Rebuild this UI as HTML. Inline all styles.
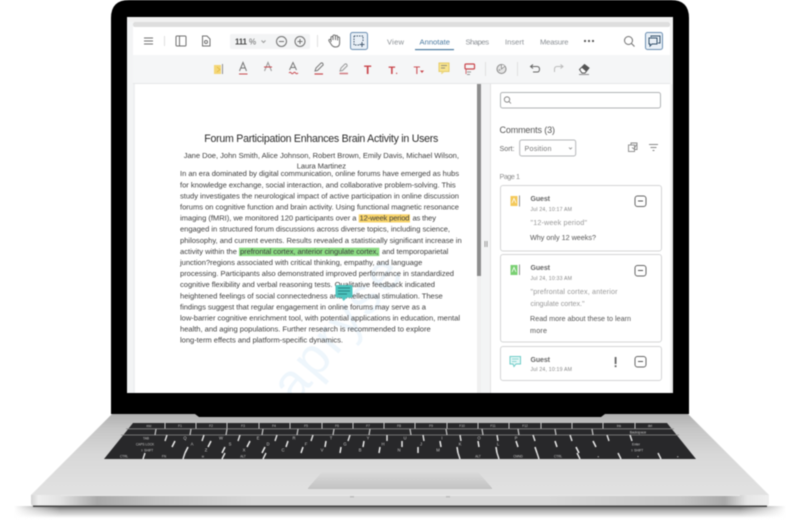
<!DOCTYPE html>
<html><head><meta charset="utf-8"><style>
html,body{margin:0;padding:0;background:#fff;width:800px;height:520px;overflow:hidden}
svg{display:block;filter:blur(.45px)}
text{font-family:"Liberation Sans",sans-serif}
</style></head><body>
<svg width="800" height="520" viewBox="0 0 800 520" xmlns="http://www.w3.org/2000/svg">
<defs>
<linearGradient id="base" x1="0" y1="0" x2="0" y2="1"><stop offset="0" stop-color="#b0b0b0"/><stop offset=".18" stop-color="#c6c6c6"/><stop offset=".5" stop-color="#d8d8d8"/><stop offset="1" stop-color="#e2e2e2"/></linearGradient>
<linearGradient id="lip" x1="0" y1="0" x2="1" y2="0"><stop offset="0" stop-color="#d2d2d2"/><stop offset=".01" stop-color="#efefef"/><stop offset=".04" stop-color="#e2e2e2"/><stop offset=".09" stop-color="#a9a9a9"/><stop offset=".17" stop-color="#c4c4c4"/><stop offset=".3" stop-color="#d8d8d8"/><stop offset=".7" stop-color="#d8d8d8"/><stop offset=".88" stop-color="#c6c6c6"/><stop offset=".94" stop-color="#a9a9a9"/><stop offset=".97" stop-color="#e6e6e6"/><stop offset="1" stop-color="#efefef"/></linearGradient>
<linearGradient id="shad" x1="0" y1="0" x2="0" y2="1"><stop offset="0" stop-color="#666"/><stop offset=".4" stop-color="#b5b5b5"/><stop offset="1" stop-color="#fff"/></linearGradient>
<linearGradient id="fadeL" x1="0" y1="0" x2="1" y2="0"><stop offset="0" stop-color="#fff"/><stop offset="1" stop-color="#fff" stop-opacity="0"/></linearGradient>
<linearGradient id="fadeR" x1="0" y1="0" x2="1" y2="0"><stop offset="0" stop-color="#fff" stop-opacity="0"/><stop offset="1" stop-color="#fff"/></linearGradient>
<linearGradient id="pad" x1="0" y1="0" x2="0" y2="1"><stop offset="0" stop-color="#dadada"/><stop offset="1" stop-color="#c2c2c2"/></linearGradient>
<clipPath id="doc"><rect x="135" y="84" width="342" height="309"/></clipPath>
</defs>

<!-- shadow -->
<rect x="14" y="506" width="772" height="12" fill="url(#shad)"/>
<rect x="14" y="505" width="46" height="15" fill="url(#fadeL)"/>
<rect x="740" y="505" width="46" height="15" fill="url(#fadeR)"/>

<!-- base -->
<polygon points="112,414 688,414 769,495 31,495" fill="url(#base)"/>
<path d="M31,495H769V503Q769,506.500 765,506.500H35Q31,506.500 31,503Z" fill="url(#lip)"/>
<rect x="33" y="505.500" width="734" height="1.500" fill="#444"/>
<rect x="60" y="495" width="680" height="1" fill="#e8e8e8"/>

<!-- bezel -->
<path d="M111,18Q111,0 129,0H671Q689,0 689,18V414H605L601,417H199L195,414H111Z" fill="#000"/>

<!-- keyboard -->
<polygon points="133,423 667,423 696,459 104,459" fill="#28282a"/>
<g stroke="#c8c8c8" stroke-width="1" fill="none">
<path d="M126,428.800H674M121,435H679" stroke="#8a8a8a" stroke-width=".8"/>
<path d="M165,423V428.500M196,423V428.500M227,423V428.500M259,423V428.500M290,423V428.500M322,423V428.500M353,423V428.500M384,423V428.500M415,423V428.500M447,423V428.500M478,423V428.500M509,423V428.500M541,423V428.500M572,423V428.500M603,423V428.500M635,423V428.500"/>
<path d="M156,429L155,435M191,429L190,435M227,429L226,435M263,429L262,435M298,429L297,435M334,429L333,435M370,429L369,435M410,429L411,435M446,429L447,435M482,429L483,435M518,429L519,435M555,429L556,435M592,429L593,435" stroke-width="1.200"/>
<path d="M167,435L165,441M204,435L202,441M240,435L238,441M277,435L275,441M313,435L311,441M350,435L348,441M387,435L387,441M423,435L424,441M460,435L461,441M497,435L498,441M533,435L535,441M570,435L572,441M607,435L609,441M630,435L632,441" stroke="#e4e4e4" stroke-width="1.400"/>
<path d="M175,441L172,447M211,441L208,447M250,441L247,447M288,441L286,447M326,441L325,447M364,441L363,447M402,441L402,447M440,441L441,447M478,441L479,447M516,441L518,447M555,441L557,447M593,441L596,447" stroke="#ececec" stroke-width="1.500"/>
<path d="M188,447L185,453M225,447L222,453M265,447L262,453M303,447L301,453M341,447L340,453M380,447L379,453M418,447L418,453M457,447L458,453M496,447L497,453M535,447L537,453M576,447L579,453" stroke="#ececec" stroke-width="1.500"/>
<path d="M145,453L143,459M185,453L183,459M225,453L222,459M266,453L263,459M458,453L460,459M497,453L499,459M537,453L539,459M577,453L580,459M618,453L621,459M658,453L661,459" stroke="#e8e8e8" stroke-width="1.400"/>
</g>
<g fill="#c8c8c8" font-size="3.200" text-anchor="middle">
<text x="149" y="427">esc</text><text x="180" y="427">F1</text><text x="211" y="427">F2</text><text x="243" y="427">F3</text><text x="274" y="427">F4</text><text x="306" y="427">F5</text><text x="337" y="427">F6</text><text x="368" y="427">F7</text><text x="399" y="427">F8</text><text x="431" y="427">F9</text><text x="462" y="427">F10</text><text x="493" y="427">F11</text><text x="525" y="427">F12</text><text x="619" y="427">ins</text><text x="650" y="427">del</text>
<text x="638" y="433.500" font-size="3.400">Backspace</text>
<text x="146" y="439.500">TAB</text><text x="185" y="439.500" font-size="4.200">Q</text><text x="221" y="439.500" font-size="4.200">W</text><text x="258" y="439.500" font-size="4.200">E</text><text x="294" y="439.500" font-size="4.200">R</text><text x="331" y="439.500" font-size="4.200">T</text><text x="368" y="439.500" font-size="4.200">Y</text><text x="405" y="439.500" font-size="4.200">U</text><text x="442" y="439.500" font-size="4.200">I</text><text x="479" y="439.500" font-size="4.200">O</text><text x="516" y="439.500" font-size="4.200">P</text>
<text x="145" y="445.500">CAPS LOCK</text><text x="192" y="445.500" font-size="4.200">A</text><text x="230" y="445.500" font-size="4.200">S</text><text x="268" y="445.500" font-size="4.200">D</text><text x="306" y="445.500" font-size="4.200">F</text><text x="345" y="445.500" font-size="4.200">G</text><text x="383" y="445.500" font-size="4.200">H</text><text x="421" y="445.500" font-size="4.200">J</text><text x="460" y="445.500" font-size="4.200">K</text><text x="498" y="445.500" font-size="4.200">L</text><text x="636" y="445.500" font-size="3.400">Enter</text>
<text x="147" y="451.500">⇧ SHIFT</text><text x="206" y="451.500" font-size="4.200">Z</text><text x="244" y="451.500" font-size="4.200">X</text><text x="283" y="451.500" font-size="4.200">C</text><text x="322" y="451.500" font-size="4.200">V</text><text x="360" y="451.500" font-size="4.200">B</text><text x="399" y="451.500" font-size="4.200">N</text><text x="438" y="451.500" font-size="4.200">M</text><text x="637" y="451.500">⇧ SHIFT</text>
<text x="124" y="457.500">CTRL</text><text x="164" y="457.500">FN</text><text x="203" y="457.500">⊞</text><text x="243" y="457.500">ALT</text><text x="478" y="457.500">ALT</text><text x="518" y="457.500">CMND</text><text x="558" y="457.500">CTRL</text><text x="598" y="457.500">◂</text><text x="638" y="457.500">▾</text><text x="678" y="457.500">▸</text>
</g>

<!-- trackpad -->
<polygon points="322,472 478,472 492,488 492,489 308,489 308,488" fill="url(#pad)"/>
<rect x="350" y="496" width="4" height="1.500" fill="#bbb"/><rect x="446" y="496" width="4" height="1.500" fill="#bbb"/>

<!-- screen -->
<rect x="127" y="17" width="546" height="376" fill="#fff"/>
<rect x="127" y="17" width="546" height="5" fill="#f1f1f1"/>
<rect x="133" y="22" width="537" height="5" rx="2" fill="#dedede"/>
<rect x="127" y="22" width="6" height="371" fill="#f3f4f5"/>
<rect x="670" y="22" width="3" height="371" fill="#f3f3f3"/>
<rect x="133" y="27" width="537" height="28" fill="#fff"/>
<rect x="133" y="55" width="537" height="28" fill="#f5f6f7"/>
<rect x="133" y="83" width="537" height="1" fill="#e6e7e8"/>
<rect x="133" y="84" width="2" height="309" fill="#eef0f1"/>

<!-- doc -->
<rect x="135" y="84" width="342" height="309" fill="#fff"/>
<rect x="477" y="84" width="4" height="192" fill="#8d8d8d"/>
<rect x="477" y="276" width="4" height="117" fill="#f0f0f0"/>
<rect x="481" y="84" width="9" height="309" fill="#f3f4f5"/>
<rect x="490" y="84" width="1" height="309" fill="#e2e2e2"/>
<path d="M485,241V247M487,241V247" stroke="#999" stroke-width="1"/>

<g clip-path="url(#doc)"><text transform="translate(295,405) rotate(-50)" font-size="52" fill="#eef6fc" letter-spacing="3">apryse</text></g>

<rect x="358.700" y="214.300" width="51.300" height="8.200" fill="#f8d46a"/>
<rect x="239" y="247.700" width="140.300" height="8.400" fill="#8cdc84"/>

<text x="204.300" y="142" font-size="10.600" fill="#2b2b2b" textLength="234">Forum Participation Enhances Brain Activity in Users</text>
<g font-size="7.600" fill="#3f3f3f">
<text x="183.700" y="158" textLength="275.300">Jane Doe, John Smith, Alice Johnson, Robert Brown, Emily Davis, Michael Wilson,</text>
<text x="296.700" y="168.500" textLength="49.300">Laura Martinez</text>
<text x="180" y="176.200" textLength="279">In an era dominated by digital communication, online forums have emerged as hubs</text>
<text x="180" y="187.300" textLength="275.700">for knowledge exchange, social interaction, and collaborative problem-solving. This</text>
<text x="180" y="198.400" textLength="279">study investigates the neurological impact of active participation in online discussion</text>
<text x="180" y="209.500" textLength="279">forums on cognitive function and brain activity. Using functional magnetic resonance</text>
<text x="180" y="220.600" textLength="176.500">imaging (fMRI), we monitored 120 participants over a</text>
<text x="359.500" y="220.600" textLength="50">12-week period</text>
<text x="412.500" y="220.600" textLength="23.500">as they</text>
<text x="180" y="231.700" textLength="270">engaged in structured forum discussions across diverse topics, including science,</text>
<text x="180" y="242.800" textLength="281.700">philosophy, and current events. Results revealed a statistically significant increase in</text>
<text x="180" y="253.900" textLength="57">activity within the</text>
<text x="240" y="253.900" textLength="138.500">prefrontal cortex, anterior cingulate cortex,</text>
<text x="382" y="253.900" textLength="66.300">and temporoparietal</text>
<text x="180" y="265" textLength="242.300">junction?regions associated with critical thinking, empathy, and language</text>
<text x="180" y="276.100" textLength="274">processing. Participants also demonstrated improved performance in standardized</text>
<text x="180" y="287.200" textLength="255">cognitive flexibility and verbal reasoning tests. Qualitative feedback indicated</text>
<text x="180" y="298.300" textLength="262.700">heightened feelings of social connectedness and intellectual stimulation. These</text>
<text x="180" y="309.400" textLength="246">findings suggest that regular engagement in online forums may serve as a</text>
<text x="180" y="320.500" textLength="280">low-barrier cognitive enrichment tool, with potential applications in education, mental</text>
<text x="180" y="331.600" textLength="250.700">health, and aging populations. Further research is recommended to explore</text>
<text x="180" y="342.700" textLength="163">long-term effects and platform-specific dynamics.</text>
</g>
<!-- sticky note on doc -->
<path d="M337,285H351Q352.500,285 352.500,286.500V296Q352.500,297.500 351,297.500H347L343.500,301L341.500,297.500H337Q335.500,297.500 335.500,296V286.500Q335.500,285 337,285Z" fill="#4dc4bf"/>
<path d="M338,288H350M338,291H350M338,294H347" stroke="#1f6f72" stroke-width=".8"/>

<!-- top toolbar -->
<g fill="none" stroke="#707070" stroke-width="1">
<path d="M144,38H153M144,41H153M144,44H153"/>
<path d="M164.500,36V46M317.500,35V47" stroke="#e0e0e0"/>
<rect x="176" y="36" width="10" height="10" rx="1"/><path d="M179.500,36V46"/>
<path d="M202.500,36H207L210,39V46H202.500Z"/><circle cx="206" cy="42" r="1.500"/>
<rect x="230" y="34" width="80" height="15" rx="2" fill="#f3f4f5" stroke="none"/>
<path d="M261.500,40.500L263.500,42.500L265.500,40.500" stroke="#999"/>
<circle cx="281.500" cy="41.500" r="5"/><path d="M279,41.500H284"/>
<circle cx="300" cy="41.500" r="5"/><path d="M297.500,41.500H302.500M300,39V44"/>
<path d="M331,42V37.500Q331,36.500 332,36.500T333,37.500V40M333,37V36Q333,35 334.200,35T335.400,36V40M335.400,36.500Q335.400,35.500 336.500,35.500T337.600,36.500V40.500M337.600,38Q337.600,37 338.600,37T339.600,38V43Q339.600,47 335.500,47Q332.500,47 331,44L329,41Q328.500,40 329.500,39.500T331,40.500"/>
<rect x="350.500" y="32.500" width="17" height="17" rx="2" fill="#e9f0f7" stroke="#6c8fb2"/>
<path d="M354,36H363V41M354,36V45H359" stroke="#445a70" stroke-dasharray="1.500 1"/><path d="M362,42V47M359.500,44.500H364.500" stroke="#445a70"/>
<circle cx="628.500" cy="40.500" r="4"/><path d="M631.500,43.500L634.500,46.500"/>
<rect x="645.500" y="32.500" width="17" height="17" rx="2" fill="#e9f0f7" stroke="#6c8fb2"/>
<path d="M651,37V36H660V43H658" stroke="#33506b"/><path d="M649,38H657V44H652L650,46V44H649Z" stroke="#33506b"/>
</g>
<text x="235" y="44.500" font-size="8" font-weight="bold" fill="#444" textLength="12">111</text>
<text x="249" y="44.500" font-size="8" fill="#666">%</text>
<g font-size="7.600" fill="#8a8f94">
<text x="387" y="44.500" textLength="17">View</text>
<text x="419.500" y="44.500" textLength="30.500" fill="#4b7aa0">Annotate</text>
<text x="465.500" y="44.500" textLength="23.500">Shapes</text>
<text x="505" y="44.500" textLength="19">Insert</text>
<text x="540" y="44.500" textLength="28.500">Measure</text>
</g>
<rect x="415" y="49" width="39" height="1.200" fill="#4b7aa0"/>
<circle cx="585" cy="41" r="1.100" fill="#555"/><circle cx="589" cy="41" r="1.100" fill="#555"/><circle cx="593" cy="41" r="1.100" fill="#555"/>

<!-- annotate toolbar -->
<rect x="214" y="65" width="7" height="9" fill="#f4d676"/><path d="M217,67L220,69.500L217,72" stroke="#e0b840" fill="none" stroke-width=".8"/><path d="M222.500,64V74" stroke="#777" stroke-width=".8"/>
<g font-size="11" fill="none" stroke="#777" stroke-width="1">
<path d="M239.500,71L243,62.500L246.500,71M240.800,68H245.200"/><path d="M239,74H247.500" stroke="#c84a50"/>
<path d="M264.500,71L268,62.500L271.500,71" stroke="#999"/><path d="M264,67H272" stroke="#c84a50"/>
<path d="M289.500,70L293,62.500L296.500,70M290.800,67.500H295.200"/><path d="M289,73Q290.200,71.500 291.200,73T293.400,73T295.600,73T298,73" stroke="#c84a50"/>
<path d="M315,71L316,68L321,63Q322.500,62.500 323,64T322.500,65.500L317.500,70.500Z"/><path d="M314.500,74H323" stroke="#c84a50" stroke-width="1.200"/>
<path d="M340,71L341,68L345,64Q346.500,63.500 347,65T346.500,66.500L342.500,70.500Z" stroke="#999"/><path d="M339.500,73.500H348" stroke="#d07a80" stroke-width="1.500"/>
</g>
<g fill="#c9474d" font-weight="bold">
<text x="364" y="74" font-size="12">T</text>
<text x="388.500" y="74" font-size="11">T</text><text x="395.500" y="74" font-size="8">.</text>
<text x="413.500" y="74" font-size="11" font-weight="normal">T</text>
</g>
<path d="M420,70.500H424L422,73Z" fill="#c9474d"/>
<rect x="439" y="63" width="10" height="8.500" fill="#f8e48e" stroke="#e5cc6a" stroke-width="1"/><path d="M441,65.500H447M441,68H445" stroke="#777" stroke-width=".7"/><path d="M442,71.500L441.500,74L444.500,71.500Z" fill="#f8e48e" stroke="#e5cc6a" stroke-width=".5"/>
<rect x="465" y="64" width="9.500" height="5" rx="1" fill="none" stroke="#c9474d" stroke-width="1.200"/><path d="M467,72H471M467,74.500H470" stroke="#777" stroke-width=".8"/><path d="M466,69V74" stroke="#c9474d" stroke-width=".8"/>
<path d="M485.500,62V76M517.500,62V76" stroke="#e0e0e0"/>
<circle cx="501.500" cy="69" r="4.500" fill="#e4e4e4" stroke="#888"/><path d="M501.500,64.500V69L505,66" stroke="#888" fill="#fff" stroke-width=".8"/><circle cx="499.500" cy="70" r=".8" fill="#888"/>
<path d="M531,66.500H537Q539.500,66.500 539.500,69.300T537,72H533M533,64.500L530.500,66.500L533,68.500" fill="none" stroke="#666" stroke-width="1"/>
<path d="M562.500,66.500H557Q554.500,66.500 554.500,69.300V72M560.500,64.500L563,66.500L560.500,68.500" fill="none" stroke="#bbb" stroke-width="1"/>
<path d="M579.500,69.500L584.500,64.500L589,68L585,73H582Z" fill="#fff" stroke="#555" stroke-width="1"/><path d="M584.500,64.500L589,68L586,71.500L581.500,67.500Z" fill="#555"/><path d="M579,74.500H589" stroke="#777" stroke-width=".8"/>

<!-- right panel -->
<rect x="500.500" y="92.500" width="160" height="15.500" rx="2" fill="#fff" stroke="#b1b3b5"/>
<circle cx="507" cy="99.500" r="2.700" fill="none" stroke="#777" stroke-width=".8"/><path d="M509,101.500L511,103.500" stroke="#777" stroke-width=".8"/>
<text x="499.500" y="133" font-size="9" fill="#555" textLength="55.500">Comments (3)</text>
<text x="499.500" y="151" font-size="7.200" fill="#666" textLength="15">Sort:</text>
<rect x="519.700" y="140" width="56" height="16" rx="2" fill="#fff" stroke="#b5b7b9"/>
<text x="524.500" y="151" font-size="7.200" fill="#777" textLength="27">Position</text>
<path d="M569,147.500L570.500,149L572,147.500" stroke="#888" fill="none" stroke-width=".8"/>
<g fill="none" stroke="#888" stroke-width=".9">
<rect x="628.500" y="145" width="6" height="6.500"/><path d="M631,145V143H637V149.500H634.500M632,147.500L634,149L636.500,144.500" stroke="#888"/>
<path d="M649,144.500H658M650.500,147.500H656.500M652.500,150.500H654.500"/>
</g>
<text x="499.500" y="179" font-size="7.200" fill="#8c8c8c" textLength="20.500">Page 1</text>

<rect x="500.500" y="185.500" width="161" height="65.500" rx="2.500" fill="#fff" stroke="#d4d5d6"/>
<rect x="500.500" y="254.500" width="161" height="87.500" rx="2.500" fill="#fff" stroke="#d4d5d6"/>
<rect x="500.500" y="346.500" width="161" height="34" rx="2.500" fill="#fff" stroke="#d4d5d6"/>
<rect x="671.500" y="84" width="1" height="309" fill="#e5e5e5"/>

<!-- card 1 -->
<rect x="510.500" y="196" width="7" height="10" fill="#f4c95a"/><path d="M512,203L514,198.500L516,203" stroke="#fff" fill="none" stroke-width=".8"/><path d="M519.500,195.500V206.500" stroke="#777" stroke-width=".8"/>
<text x="530.500" y="201" font-size="7" font-weight="bold" fill="#666" textLength="19.500">Guest</text>
<text x="530.500" y="211" font-size="5.200" fill="#888" textLength="41.500">Jul 24, 10:17 AM</text>
<text x="530.500" y="225" font-size="7.200" fill="#999" textLength="56.500">"12-week period"</text>
<text x="530" y="240" font-size="7.200" fill="#555" textLength="66">Why only 12 weeks?</text>
<rect x="635" y="196" width="11" height="10.500" rx="2.500" fill="none" stroke="#666"/><path d="M638,201H643" stroke="#555"/>

<!-- card 2 -->
<rect x="510.500" y="265" width="7" height="10" fill="#7ad073"/><path d="M512,272L514,267.500L516,272" stroke="#fff" fill="none" stroke-width=".8"/><path d="M519.500,264.500V275" stroke="#777" stroke-width=".8"/>
<text x="530.500" y="270" font-size="7" font-weight="bold" fill="#666" textLength="19.500">Guest</text>
<text x="530.500" y="280" font-size="5.200" fill="#888" textLength="41.500">Jul 24, 10:33 AM</text>
<text x="530.500" y="294" font-size="7.200" fill="#999" textLength="87">"prefrontal cortex, anterior</text>
<text x="530.500" y="306" font-size="7.200" fill="#999" textLength="54">cingulate cortex."</text>
<text x="530" y="321" font-size="7.200" fill="#555" textLength="101">Read more about these to learn</text>
<text x="530" y="333" font-size="7.200" fill="#555" textLength="17">more</text>
<rect x="635" y="265.500" width="11" height="10.500" rx="2.500" fill="none" stroke="#666"/><path d="M638,270.500H643" stroke="#555"/>

<!-- card 3 -->
<path d="M510,356.500H520.500V364H516L514,366.500L513,364H510Z" fill="#e4f7f6" stroke="#6fcdc8" stroke-width="1"/><path d="M512,359H518.500M512,361.500H516.500" stroke="#6fcdc8" stroke-width=".7"/>
<text x="530.500" y="362" font-size="7" font-weight="bold" fill="#666" textLength="19.500">Guest</text>
<text x="530.500" y="371" font-size="5.200" fill="#888" textLength="41.500">Jul 24, 10:19 AM</text>
<rect x="614.700" y="357" width="1.800" height="7" fill="#666"/><rect x="614.700" y="365.300" width="1.800" height="1.800" fill="#666"/>
<rect x="635" y="356.500" width="11" height="10.500" rx="2.500" fill="none" stroke="#666"/><path d="M638,361.500H643" stroke="#555"/>
</svg>
</body></html>
